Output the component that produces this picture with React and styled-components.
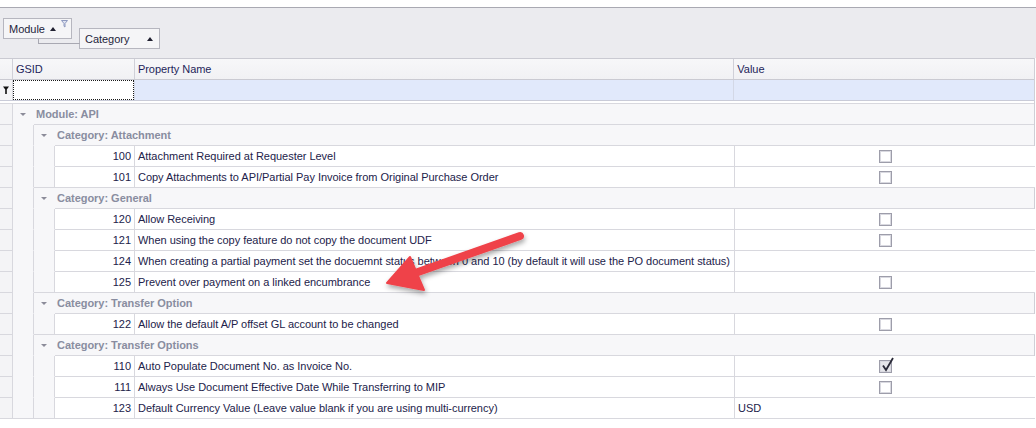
import React from "react";
import styled, { createGlobalStyle, css } from "styled-components";

const GlobalStyle = createGlobalStyle`
  html, body { margin: 0; padding: 0; background: #ffffff; }
  body { font-family: "Liberation Sans", Arial, sans-serif; font-size: 11px; color: #22224a; letter-spacing: -0.03px; }
  * { box-sizing: border-box; }
`;

const LINE = "#d8d8de";

const Page = styled.div`
  position: relative;
  width: 1036px;
  height: 428px;
  background: #ffffff;
  overflow: hidden;
`;

const TopGap = styled.div`
  height: 7px;
  background: #ffffff;
`;

const GroupPanel = styled.div`
  height: 51px;
  border-top: 1px solid #a9a9b2;
  background: #ebebef;
  display: flex;
  align-items: flex-start;
  padding: 10px 0 0 3px;
`;

const GroupBox = styled.div`
  position: relative;
  display: flex;
  align-items: center;
  height: 21px;
  width: ${(p) => p.$w}px;
  margin-top: ${(p) => p.$top || 0}px;
  margin-left: ${(p) => p.$left || 0}px;
  padding-left: 5px;
  background: #f5f5f7;
  border: 1px solid #b6b6bf;
  color: #1f1f3c;
  font-size: 11px;
  ${(p) =>
    p.$linked &&
    css`
      &::before {
        content: "";
        position: absolute;
        left: -42px;
        top: 10px;
        width: 41px;
        height: 4px;
        border-left: 1px solid #a8a8b2;
        border-bottom: 1px solid #a8a8b2;
      }
    `}
`;

const SortUp = styled.span`
  width: 0;
  height: 0;
  border-left: 3px solid transparent;
  border-right: 3px solid transparent;
  border-bottom: 4px solid #202030;
  margin-left: ${(p) => p.$gap}px;
`;

const FilterGlyph = styled.svg`
  position: absolute;
  right: 3px;
  top: 1px;
`;

const Grid = styled.div`
  width: 1035px;
  border-right: 1px solid #cfcfd6;
`;

const Row = styled.div`
  display: flex;
  height: ${(p) => p.$h || 21}px;
`;

const HeaderRow = styled(Row)`
  height: 22px;
  border-top: 1px solid #cacad2;
  border-bottom: 1px solid #cacad2;
  background: linear-gradient(#f7f7f9, #f1f1f4);
`;

const HeaderCell = styled.div`
  width: ${(p) => p.$w}px;
  display: flex;
  align-items: center;
  padding-left: 3px;
  border-right: 1px solid #d0d0d8;
  color: #1f1f5a;
  white-space: nowrap;
  &:last-child { border-right: none; }
`;

const FilterRow = styled(Row)`
  height: 21px;
  border-bottom: 1px solid #c9cbd8;
`;

const IndicatorCell = styled.div`
  width: 13px;
  flex: none;
  display: flex;
  align-items: center;
  justify-content: center;
  background: #f4f4f6;
  border-right: 1px solid ${LINE};
  border-bottom: 1px solid ${LINE};
`;

const FilterIndicator = styled(IndicatorCell)`
  border-bottom: none;
  justify-content: flex-start;
  padding-left: 3px;
`;

const FocusCell = styled.div`
  width: 121px;
  flex: none;
  background: #ffffff;
  border: 1px dotted #1a1a1a;
`;

const FilterCell = styled.div`
  width: ${(p) => p.$w}px;
  flex: none;
  background: #e1e9fb;
  border-left: ${(p) => (p.$first ? "1px solid #d3d8e6" : "none")};
  border-right: ${(p) => (p.$last ? "none" : "1px solid #d3d8e6")};
`;

const Separator = styled.div`
  height: 3px;
  border-bottom: 1px solid ${LINE};
`;

const Body = styled.div`
  display: flex;
  flex-direction: column;
`;

const Indent = styled.div`
  width: 21px;
  flex: none;
  background: #f7f7f9;
  border-right: ${(p) => (p.$divider ? `1px solid ${LINE}` : "none")};
  border-bottom: 1px solid ${(p) => (p.$closed ? LINE : "transparent")};
  display: flex;
  align-items: center;
  justify-content: center;
`;

const Toggle = styled.span`
  width: 0;
  height: 0;
  margin-left: -2px;
  border-left: 3px solid transparent;
  border-right: 3px solid transparent;
  border-top: 3px solid #8c8c99;
`;

const GroupContent = styled.div`
  flex: 1;
  display: flex;
  align-items: center;
  padding-left: 2px;
  background: #f7f7f9;
  border-bottom: 1px solid ${LINE};
  color: #898da0;
  font-weight: bold;
  font-size: 11px;
`;

const Cell = styled.div`
  width: ${(p) => p.$w}px;
  flex: none;
  display: flex;
  align-items: center;
  justify-content: ${(p) => p.$align || "flex-start"};
  padding: 0 3px;
  background: #ffffff;
  border-right: ${(p) => (p.$noRight ? "none" : `1px solid ${LINE}`)};
  border-bottom: 1px solid ${LINE};
  white-space: nowrap;
  overflow: hidden;
  color: #22224a;
`;

const Check = styled.span`
  position: relative;
  display: inline-block;
  width: 13px;
  height: 13px;
  border: 1px solid #9d9daa;
  background: ${(p) => (p.$on ? "#e6e6ea" : "#ffffff")};
  box-shadow: inset 0 0 0 1px #d9d9e0;
`;

const CheckMark = styled.svg`
  position: absolute;
  left: 1px;
  top: -4px;
  overflow: visible;
`;

const ArrowLayer = styled.svg`
  position: absolute;
  left: 0;
  top: 0;
  pointer-events: none;
`;

const groups = [
  {
    name: "Attachment",
    rows: [
      { id: 100, name: "Attachment Required at Requester Level", value: "box" },
      { id: 101, name: "Copy Attachments to API/Partial Pay Invoice from Original Purchase Order", value: "box" },
    ],
  },
  {
    name: "General",
    rows: [
      { id: 120, name: "Allow Receiving", value: "box" },
      { id: 121, name: "When using the copy feature do not copy the document UDF", value: "box" },
      {
        id: 124,
        name: "When creating a partial payment set the docuemnt status between 0 and 10 (by default it will use the PO document status)",
        value: "",
      },
      { id: 125, name: "Prevent over payment on a linked encumbrance", value: "box" },
    ],
  },
  {
    name: "Transfer Option",
    rows: [{ id: 122, name: "Allow the default A/P offset GL account to be changed", value: "box" }],
  },
  {
    name: "Transfer Options",
    rows: [
      { id: 110, name: "Auto Populate Document No. as Invoice No.", value: "checked" },
      { id: 111, name: "Always Use Document Effective Date While Transferring to MIP", value: "box" },
      { id: 123, name: "Default Currency Value (Leave value blank if you are using multi-currency)", value: "USD" },
    ],
  },
];

function Value({ v }) {
  if (v === "box") return <Check />;
  if (v === "checked")
    return (
      <Check $on>
        <CheckMark width="13" height="15" viewBox="0 0 13 15">
          <path d="M2 8.5 L5 13 L12 1" fill="none" stroke="#2a2a38" strokeWidth="1.8" strokeLinejoin="miter" />
        </CheckMark>
      </Check>
    );
  return v;
}

function DataRow({ row, lastInGroup, lastAll }) {
  return (
    <Row>
      <IndicatorCell />
      <Indent $divider $closed={lastAll} />
      <Indent $divider $closed={lastInGroup} />
      <Cell $w={80} $align="flex-end">{row.id}</Cell>
      <Cell $w={600}>{row.name}</Cell>
      <Cell $w={300} $noRight $align={row.value === "box" || row.value === "checked" ? "center" : "flex-start"}>
        <Value v={row.value} />
      </Cell>
    </Row>
  );
}

export default function App() {
  return (
    <Page>
      <GlobalStyle />
      <TopGap />
      <GroupPanel>
        <GroupBox $w={69}>
          Module
          <SortUp $gap={5} />
          <FilterGlyph width="7" height="8" viewBox="0 0 7 8">
            <path d="M0.5 0.5 H6.5 L4 3.5 V7 L3 6.3 V3.5 Z" fill="#dfe3f0" stroke="#8f9ac0" strokeWidth="1" />
          </FilterGlyph>
        </GroupBox>
        <GroupBox $w={81} $top={10} $left={7} $linked>
          Category
          <SortUp $gap={18} />
        </GroupBox>
      </GroupPanel>
      <Grid>
        <HeaderRow>
          <HeaderCell $w={13} />
          <HeaderCell $w={122}>GSID</HeaderCell>
          <HeaderCell $w={600}>Property Name</HeaderCell>
          <HeaderCell $w={300}>Value</HeaderCell>
        </HeaderRow>
        <FilterRow>
          <FilterIndicator>
            <svg width="6" height="8" viewBox="0 0 6 8">
              <path d="M0 0.5 H6 L3.8 3.5 V8 H2.2 V3.5 Z" fill="#111" />
            </svg>
          </FilterIndicator>
          <FocusCell />
          <FilterCell $w={600} $first />
          <FilterCell $w={300} $last />
        </FilterRow>
        <Separator />
        <Body>
          <Row>
            <IndicatorCell />
            <Indent>
              <Toggle />
            </Indent>
            <GroupContent>Module: API</GroupContent>
          </Row>
          {groups.map((g, gi) => (
            <React.Fragment key={g.name}>
              <Row>
                <IndicatorCell />
                <Indent $divider />
                <Indent>
                  <Toggle />
                </Indent>
                <GroupContent>Category: {g.name}</GroupContent>
              </Row>
              {g.rows.map((r, ri) => (
                <DataRow
                  key={r.id}
                  row={r}
                  lastInGroup={ri === g.rows.length - 1}
                  lastAll={gi === groups.length - 1 && ri === g.rows.length - 1}
                />
              ))}
            </React.Fragment>
          ))}
        </Body>
      </Grid>
      <ArrowLayer width="1036" height="428" viewBox="0 0 1036 428">
        <defs>
          <filter id="sh" x="-20%" y="-20%" width="140%" height="160%">
            <feDropShadow dx="1" dy="3" stdDeviation="2.5" floodColor="#000" floodOpacity="0.35" />
          </filter>
        </defs>
        <g filter="url(#sh)">
          <line x1="520" y1="236" x2="418" y2="272" stroke="#ef4349" strokeWidth="8" strokeLinecap="round" />
          <path d="M387 283 L410 257 L424 290 Z" fill="#ef4349" stroke="#ef4349" strokeWidth="2" strokeLinejoin="round" />
        </g>
      </ArrowLayer>
    </Page>
  );
}
